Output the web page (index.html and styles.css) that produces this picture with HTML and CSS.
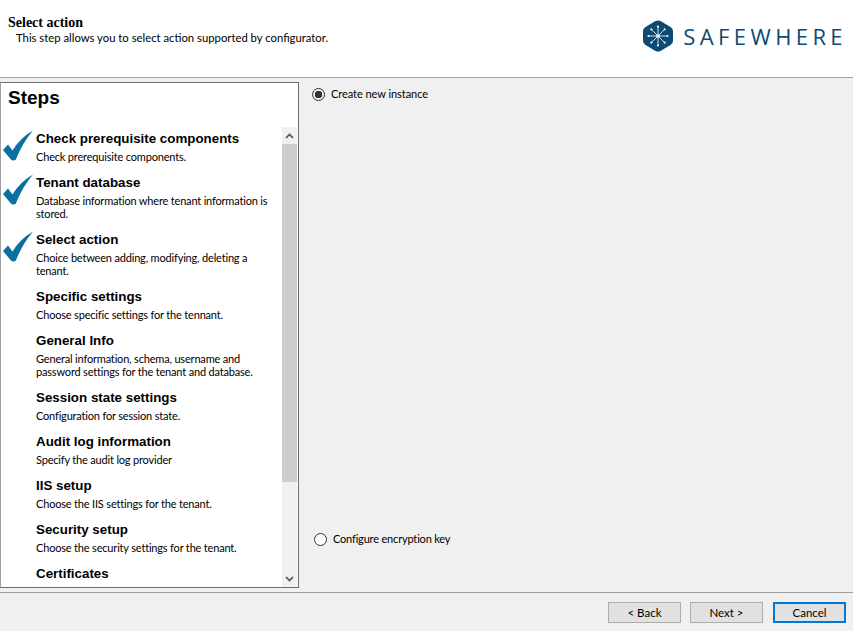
FILE: index.html
```html
<!DOCTYPE html>
<html lang="en">
<head>
<meta charset="utf-8">
<title>Select action</title>
<link rel="stylesheet" href="styles.css">
</head>
<body>
<div class="app">
  <header class="header">
    <div class="header-text">
      <h1 class="page-title">Select action</h1>
      <p class="page-sub">This step allows you to select action supported by configurator.</p>
    </div>
    <div class="logo">
      <svg class="logo-mark" width="30" height="32" viewBox="0 0 30 32">
        <path d="M12.5 1 Q15 -0.2 17.5 1 L27.5 7 Q30 8.6 30 11 L30 21 Q30 23.4 27.5 25 L17.5 31 Q15 32.2 12.5 31 L2.500 25 Q0 23.4 0 21 L0 11 Q0 8.6 2.500 7 Z" fill="#0d4a73"/>
        <g stroke="#cfdfe9" stroke-width="1" stroke-linecap="round">
          <path d="M15 16 L15 6.500 M15 16 L15 25.500 M15 16 L5.500 16 M15 16 L24.500 16 M15 16 L8.300 9.300 M15 16 L21.700 9.300 M15 16 L8.300 22.700 M15 16 L21.700 22.700"/>
        </g>
        <g fill="#eef4f8">
          <circle cx="15" cy="16" r="1.8"/><circle cx="15" cy="6.500" r="1.1"/><circle cx="15" cy="25.500" r="1.1"/>
          <circle cx="5.500" cy="16" r="1.1"/><circle cx="24.500" cy="16" r="1.1"/><circle cx="8.300" cy="9.300" r="1.1"/><circle cx="21.700" cy="9.300" r="1.1"/><circle cx="8.300" cy="22.700" r="1.1"/><circle cx="21.700" cy="22.700" r="1.1"/>
        </g>
      </svg>
      <span class="logo-text">SAFEWHERE</span>
    </div>
  </header>
  <main class="main">
    <aside class="steps">
      <h2 class="steps-title">Steps</h2>
      <div class="steps-body">
        <ul class="step-list">
          <li class="step"><svg class="check" width="32" height="32" viewBox="0 0 32 32"><path d="M2 20 L7 14.500 L11.500 20.500 Q19 8 32 0.500 Q21.500 13 15.500 28 Q15 30.500 12.500 30.500 Q10.500 30.500 9.500 29 Z" fill="#0b709f"/></svg>
            <div class="step-text"><div class="step-name">Check prerequisite components</div><div class="step-desc">Check prerequisite components.</div></div></li>
          <li class="step"><svg class="check" width="32" height="32" viewBox="0 0 32 32"><path d="M2 20 L7 14.500 L11.500 20.500 Q19 8 32 0.500 Q21.500 13 15.500 28 Q15 30.500 12.500 30.500 Q10.500 30.500 9.500 29 Z" fill="#0b709f"/></svg>
            <div class="step-text"><div class="step-name">Tenant database</div><div class="step-desc">Database information where tenant information is stored.</div></div></li>
          <li class="step"><svg class="check" width="32" height="32" viewBox="0 0 32 32"><path d="M2 20 L7 14.500 L11.500 20.500 Q19 8 32 0.500 Q21.500 13 15.500 28 Q15 30.500 12.500 30.500 Q10.500 30.500 9.500 29 Z" fill="#0b709f"/></svg>
            <div class="step-text"><div class="step-name">Select action</div><div class="step-desc">Choice between adding, modifying, deleting a tenant.</div></div></li>
          <li class="step"><div class="step-text"><div class="step-name">Specific settings</div><div class="step-desc">Choose specific settings for the tennant.</div></div></li>
          <li class="step"><div class="step-text"><div class="step-name">General Info</div><div class="step-desc">General information, schema, username and password settings for the tenant and database.</div></div></li>
          <li class="step"><div class="step-text"><div class="step-name">Session state settings</div><div class="step-desc">Configuration for session state.</div></div></li>
          <li class="step"><div class="step-text"><div class="step-name">Audit log information</div><div class="step-desc">Specify the audit log provider</div></div></li>
          <li class="step"><div class="step-text"><div class="step-name">IIS setup</div><div class="step-desc">Choose the IIS settings for the tenant.</div></div></li>
          <li class="step"><div class="step-text"><div class="step-name">Security setup</div><div class="step-desc">Choose the security settings for the tenant.</div></div></li>
          <li class="step"><div class="step-text"><div class="step-name">Certificates</div></div></li>
        </ul>
        <div class="scrollbar">
          <div class="scroll-btn"><svg width="9" height="6" viewBox="0 0 9 6"><path d="M1 5 L4.5 1.5 L8 5" fill="none" stroke="#505050" stroke-width="1.6"/></svg></div>
          <div class="scroll-track"><div class="scroll-thumb"></div></div>
          <div class="scroll-btn"><svg width="9" height="6" viewBox="0 0 9 6"><path d="M1 1 L4.5 4.5 L8 1" fill="none" stroke="#505050" stroke-width="1.6"/></svg></div>
        </div>
      </div>
    </aside>
    <section class="actions">
      <label class="radio-row"><span class="radio radio-on"></span><span>Create new instance</span></label>
      <label class="radio-row radio-row-low"><span class="radio"></span><span>Configure encryption key</span></label>
    </section>
  </main>
  <footer class="footer">
    <button class="btn" type="button">&lt; Back</button>
    <button class="btn" type="button">Next &gt;</button>
    <button class="btn btn-focus" type="button">Cancel</button>
  </footer>
</div>
</body>
</html>
```
FILE: styles.css
```css
* { box-sizing: border-box; }
html, body { margin: 0; padding: 0; height: 100%; overflow: hidden; }
body { background: #f0f0f0; color: #000; font-family: "Lato", "Liberation Sans", sans-serif; font-size: 11px; letter-spacing: -0.05px; }
.app { display: flex; flex-direction: column; height: 631px; }

.header { height: 78px; background: #fff; border-bottom: 1px solid #a0a0a0; display: flex; justify-content: space-between; padding: 15px 6px 0 8px; flex: none; }
.page-title { margin: 0; font: bold 14px/15px "Liberation Serif", serif; letter-spacing: 0; }
.page-sub { margin: 1px 0 0 8px; font-size: 11.3px; line-height: 14px; letter-spacing: 0; }
.logo { display: flex; align-items: center; gap: 10px; height: 32px; margin-top: 5px; }
.logo-text { font-family: "Open Sans", sans-serif; font-size: 22px; letter-spacing: 4.4px; color: #0d4a73; line-height: 1; }

.main { flex: 1; display: flex; min-height: 0; }
.steps { width: 299px; height: 506px; margin-top: 4px; background: #fff; border: 1px solid #6d6d6d; border-left-color: #a0a0a0; display: flex; flex-direction: column; overflow: hidden; }
.steps-title { margin: 0; height: 44px; padding: 3px 0 0 7px; font: bold 19px/24px "Liberation Sans", sans-serif; letter-spacing: 0; flex: none; }
.steps-body { flex: 1; min-height: 0; display: flex; }
.step-list { list-style: none; margin: 0; padding: 3px 0 0; flex: 1; min-width: 0; overflow: hidden; }
.step { display: flex; position: relative; padding-left: 35px; padding-right: 12px; margin-bottom: 11px; }
.check { position: absolute; left: 0; top: 0; }
.step-name { font: bold 13.35px/18px "Liberation Sans", sans-serif; letter-spacing: 0; margin-bottom: 2px; }
.step-desc { font-size: 11px; line-height: 13px; letter-spacing: -0.18px; }

.scrollbar { width: 15px; margin-right: 1px; background: #f0f0f0; display: flex; flex-direction: column; flex: none; }
.scroll-btn { height: 17px; display: flex; align-items: center; justify-content: center; flex: none; }
.scroll-track { flex: 1; }
.scroll-thumb { height: 338px; background: #cdcdcd; }

.actions { flex: 1; display: flex; flex-direction: column; justify-content: space-between; padding: 9px 0 46px 13px; }
.radio-row { display: flex; align-items: center; gap: 6px; line-height: 14px; }
.radio-row-low { margin-left: 2px; letter-spacing: -0.18px; }
.radio { width: 13px; height: 13px; border: 1px solid #333; border-radius: 50%; background: #fff; display: block; flex: none; }
.radio-on { background: radial-gradient(circle, #333 0 3.5px, #f0f0f0 4px); }

.footer { height: 39px; flex: none; border-top: 1px solid #a0a0a0; display: flex; justify-content: flex-end; gap: 9px; padding: 9px 7px 0 0; }
.btn { width: 73px; height: 21px; background: #e1e1e1; border: 1px solid #adadad; font: 11.5px "Lato", sans-serif; color: #000; padding: 0; }
.btn-focus { border: 2px solid #0078d7; margin-left: 1px; }
```
